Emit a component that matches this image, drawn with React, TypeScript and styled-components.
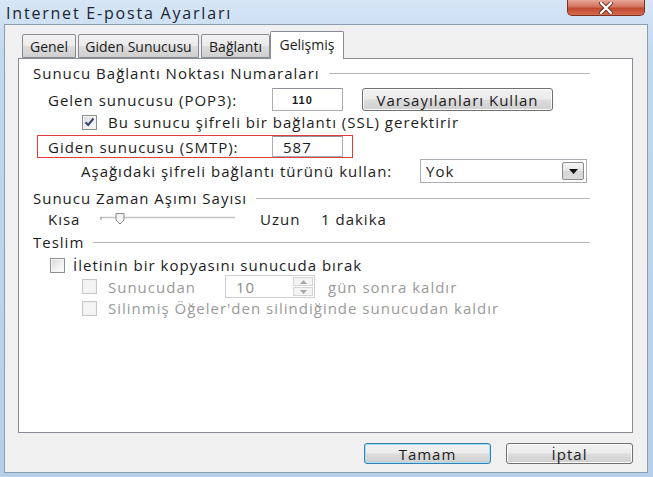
import styled, { createGlobalStyle } from 'styled-components';

const GlobalStyle = createGlobalStyle`
  html, body { margin: 0; padding: 0; }
  body {
    width: 653px;
    height: 477px;
    overflow: hidden;
    font-family: "Open Sans", "Noto Sans", sans-serif;
    color: #1c1c1c;
  }
`;

const Window = styled.div`
  width: 653px;
  height: 477px;
  box-sizing: border-box;
  padding: 0 5px 4px 4px;
  display: flex;
  flex-direction: column;
  background: linear-gradient(180deg, #d6e6f6 0%, #c2d8ee 12%, #b7cfe8 100%);
`;

const TitleBar = styled.div`
  height: 24px;
  display: flex;
  align-items: flex-start;
  justify-content: space-between;
`;

const Title = styled.div`
  font-size: 16px;
  letter-spacing: 1.8px;
  color: #1b2533;
  padding: 2px 0 0 2px;
`;

const CloseButton = styled.div`
  width: 78px;
  height: 16px;
  margin-right: 3px;
  box-sizing: border-box;
  border: 1px solid #7d3324;
  border-top: none;
  border-radius: 0 0 5px 5px;
  background: linear-gradient(180deg, #e8a697 0%, #d3735d 45%, #bf4a30 55%, #d66b4e 100%);
  display: flex;
  align-items: center;
  justify-content: center;
`;

const Client = styled.div`
  flex: 1;
  box-sizing: border-box;
  border: 1px solid #8c9db0;
  background: #f0f0f0;
  padding: 6px 14px 0 13px;
  display: flex;
  flex-direction: column;
`;

const TabStrip = styled.div`
  display: flex;
  align-items: flex-end;
  padding-left: 4px;
  height: 27px;
  position: relative;
  z-index: 1;
`;

const Tab = styled.div<{ $w: number; $active?: boolean }>`
  width: ${(p) => p.$w}px;
  height: ${(p) => (p.$active ? 28 : 24)}px;
  box-sizing: border-box;
  margin: ${(p) => (p.$active ? '0 -2px -1px -2px' : '0 2px 0 0')};
  border: 1px solid #898c95;
  border-bottom: ${(p) => (p.$active ? 'none' : '1px solid #898c95')};
  border-radius: 2px 2px 0 0;
  background: ${(p) =>
    p.$active ? '#ffffff' : 'linear-gradient(180deg, #f2f2f2 0%, #ebebeb 50%, #dddddd 51%, #cfcfcf 100%)'};
  font-size: 14px;
  display: flex;
  align-items: ${(p) => (p.$active ? 'flex-start' : 'center')};
  padding-top: ${(p) => (p.$active ? 3 : 0)}px;
  justify-content: center;
  position: relative;
  z-index: ${(p) => (p.$active ? 2 : 1)};
`;

const Panel = styled.div`
  height: 375px;
  box-sizing: border-box;
  background: #ffffff;
  border: 1px solid #898c95;
  padding: 4px 42px 0 14px;
  display: flex;
  flex-direction: column;
  font-size: 15px;
  letter-spacing: 1px;
`;

const GroupHeader = styled.div<{ $top?: number }>`
  height: 20px;
  margin-top: ${(p) => p.$top ?? 0}px;
  display: flex;
  align-items: center;
  gap: 9px;
  &::after {
    content: '';
    flex: 1;
    border-top: 1px solid #b4b4b4;
  }
`;

const Row = styled.div<{ $indent: number; $top: number; $h: number }>`
  display: flex;
  align-items: center;
  padding-left: ${(p) => p.$indent}px;
  margin-top: ${(p) => p.$top}px;
  height: ${(p) => p.$h}px;
`;

const Label = styled.span<{ $w?: number; $disabled?: boolean; $gap?: number }>`
  ${(p) => (p.$w ? `width: ${p.$w}px; flex: none;` : '')}
  margin-left: ${(p) => p.$gap ?? 0}px;
  color: ${(p) => (p.$disabled ? '#9a9a9a' : '#1c1c1c')};
  white-space: nowrap;
`;

const TextBox = styled.div<{ $h: number; $pad: number }>`
  width: 71px;
  height: ${(p) => p.$h}px;
  box-sizing: border-box;
  border: 1px solid #abadb3;
  border-top-color: #8f939b;
  background: #fff;
  display: flex;
  align-items: center;
  padding-left: ${(p) => p.$pad}px;
`;

const SmallBold = styled.span`
  font-family: "Liberation Sans", Arial, sans-serif;
  font-weight: bold;
  font-size: 11px;
  letter-spacing: 1px;
`;

const PushButton = styled.div<{ $w: number; $h: number; $default?: boolean }>`
  width: ${(p) => p.$w}px;
  height: ${(p) => p.$h}px;
  box-sizing: border-box;
  border: 1px solid ${(p) => (p.$default ? '#3c7fb1' : '#707070')};
  border-radius: 3px;
  background: linear-gradient(180deg, #f2f2f2 0%, #ebebeb 48%, #dddddd 52%, #cfcfcf 100%);
  box-shadow: inset 0 0 0 1px ${(p) => (p.$default ? '#9be0f8' : '#fbfbfb')};
  display: flex;
  align-items: center;
  justify-content: center;
  font-size: 15px;
  letter-spacing: 1px;
  color: #1c1c1c;
`;

const Highlight = styled.div`
  width: 316px;
  height: 23px;
  box-sizing: border-box;
  margin-left: 4px;
  border: 1px solid #e33b3b;
  display: flex;
  align-items: center;
  padding-left: 10px;
`;

const Box = styled.span<{ $disabled?: boolean }>`
  width: 15px;
  height: 15px;
  flex: none;
  box-sizing: border-box;
  border: 1px solid ${(p) => (p.$disabled ? '#c8c8c8' : '#8e8f8f')};
  background: ${(p) =>
    p.$disabled ? '#f4f4f4' : 'linear-gradient(135deg, #d8d8d8 0%, #f2f2f2 60%, #ffffff 100%)'};
  box-shadow: inset 0 0 0 1px ${(p) => (p.$disabled ? '#f0f0f0' : '#f4f4f4')};
  display: flex;
  align-items: center;
  justify-content: center;
`;

const Select = styled.div`
  width: 167px;
  height: 24px;
  box-sizing: border-box;
  border: 1px solid #abadb3;
  background: #fff;
  display: flex;
  align-items: center;
  justify-content: space-between;
  padding: 0 2px 0 5px;
`;

const DropButton = styled.div`
  width: 22px;
  height: 18px;
  box-sizing: border-box;
  border: 1px solid #8b8b8b;
  border-radius: 2px;
  background: linear-gradient(180deg, #f5f5f5 0%, #e6e6e6 50%, #d6d6d6 51%, #dcdcdc 100%);
  display: flex;
  align-items: center;
  justify-content: center;
`;

const Spin = styled.div`
  width: 90px;
  height: 23px;
  box-sizing: border-box;
  border: 1px solid #cfcfcf;
  background: #fff;
  display: flex;
  align-items: center;
  justify-content: space-between;
  padding: 1px 1px 1px 10px;
  color: #8c8c8c;
`;

const SpinButtons = styled.div`
  width: 20px;
  height: 100%;
  display: flex;
  flex-direction: column;
  gap: 1px;
`;

const SpinHalf = styled.div`
  flex: 1;
  border: 1px solid #d5d5d5;
  background: #f3f3f3;
  display: flex;
  align-items: center;
  justify-content: center;
`;

const Slider = styled.div`
  width: 135px;
  height: 20px;
  flex: none;
`;

const Footer = styled.div`
  display: flex;
  justify-content: flex-end;
  gap: 15px;
  margin-top: 10px;
`;

function Check({ checked, disabled }: { checked?: boolean; disabled?: boolean }) {
  return (
    <Box $disabled={disabled}>
      {checked && (
        <svg width="11" height="10" viewBox="0 0 11 10">
          <path d="M1.5 5.2 L4.2 8 L9.5 1.5" fill="none" stroke="#34466b" strokeWidth="2" />
        </svg>
      )}
    </Box>
  );
}

export default function App() {
  return (
    <>
      <GlobalStyle />
      <Window>
        <TitleBar>
          <Title>Internet E-posta Ayarları</Title>
          <CloseButton>
            <svg width="16" height="12" viewBox="0 0 16 12">
              <path d="M3 1 L13 11 M13 1 L3 11" stroke="#6b2a1c" strokeWidth="4" strokeLinecap="round" />
              <path d="M3 1 L13 11 M13 1 L3 11" stroke="#ffffff" strokeWidth="2.4" strokeLinecap="round" />
            </svg>
          </CloseButton>
        </TitleBar>

        <Client>
          <TabStrip>
            <Tab $w={54}>Genel</Tab>
            <Tab $w={121}>Giden Sunucusu</Tab>
            <Tab $w={69}>Bağlantı</Tab>
            <Tab $w={74} $active>Gelişmiş</Tab>
          </TabStrip>

          <Panel>
            <GroupHeader>Sunucu Bağlantı Noktası Numaraları</GroupHeader>

            <Row $indent={15} $top={5} $h={23}>
              <Label $w={224}>Gelen sunucusu (POP3):</Label>
              <TextBox $h={23} $pad={19}>
                <SmallBold>110</SmallBold>
              </TextBox>
              <PushButton $w={191} $h={23} style={{ marginLeft: 19 }}>
                Varsayılanları Kullan
              </PushButton>
            </Row>

            <Row $indent={49} $top={3} $h={16}>
              <Check checked />
              <Label $gap={11}>Bu sunucu şifreli bir bağlantı (SSL) gerektirir</Label>
            </Row>

            <Row $indent={0} $top={5} $h={23}>
              <Highlight>
                <Label $w={224}>Giden sunucusu (SMTP):</Label>
                <TextBox $h={21} $pad={10}>
                  587
                </TextBox>
              </Highlight>
            </Row>

            <Row $indent={48} $top={1} $h={24}>
              <Label $w={339}>Aşağıdaki şifreli bağlantı türünü kullan:</Label>
              <Select>
                <span>Yok</span>
                <DropButton>
                  <svg width="9" height="5" viewBox="0 0 9 5">
                    <path d="M0 0 H9 L4.5 5 Z" fill="#111" />
                  </svg>
                </DropButton>
              </Select>
            </Row>

            <GroupHeader $top={5}>Sunucu Zaman Aşımı Sayısı</GroupHeader>

            <Row $indent={15} $top={1} $h={20}>
              <Label $w={52}>Kısa</Label>
              <Slider>
                <svg width="135" height="20" viewBox="0 0 135 20">
                  <path d="M0 8.5 H135" stroke="#c4c4c4" strokeWidth="1.5" />
                  <path d="M1 8 V11" stroke="#b0b0b0" strokeWidth="1.5" />
                  <path
                    d="M16 4.5 H24 V11 L20 15 L16 11 Z"
                    fill="#f3f3f3"
                    stroke="#8a8a8a"
                    strokeWidth="1"
                  />
                </svg>
              </Slider>
              <Label $w={61} $gap={25}>Uzun</Label>
              <Label>1 dakika</Label>
            </Row>

            <GroupHeader $top={3}>Teslim</GroupHeader>

            <Row $indent={17} $top={5} $h={16}>
              <Check />
              <Label $gap={8}>İletinin bir kopyasını sunucuda bırak</Label>
            </Row>

            <Row $indent={49} $top={2} $h={23}>
              <Check disabled />
              <Label $w={117} $gap={11} $disabled>
                Sunucudan
              </Label>
              <Spin>
                <span>10</span>
                <SpinButtons>
                  <SpinHalf>
                    <svg width="7" height="4" viewBox="0 0 7 4">
                      <path d="M0 4 L3.5 0 L7 4 Z" fill="#a8a8a8" />
                    </svg>
                  </SpinHalf>
                  <SpinHalf>
                    <svg width="7" height="4" viewBox="0 0 7 4">
                      <path d="M0 0 H7 L3.5 4 Z" fill="#a8a8a8" />
                    </svg>
                  </SpinHalf>
                </SpinButtons>
              </Spin>
              <Label $gap={13} $disabled>
                gün sonra kaldır
              </Label>
            </Row>

            <Row $indent={49} $top={2} $h={16}>
              <Check disabled />
              <Label $gap={11} $disabled>
                Silinmiş Öğeler'den silindiğinde sunucudan kaldır
              </Label>
            </Row>
          </Panel>

          <Footer>
            <PushButton $w={127} $h={21} $default>
              Tamam
            </PushButton>
            <PushButton $w={127} $h={21}>
              İptal
            </PushButton>
          </Footer>
        </Client>
      </Window>
    </>
  );
}
